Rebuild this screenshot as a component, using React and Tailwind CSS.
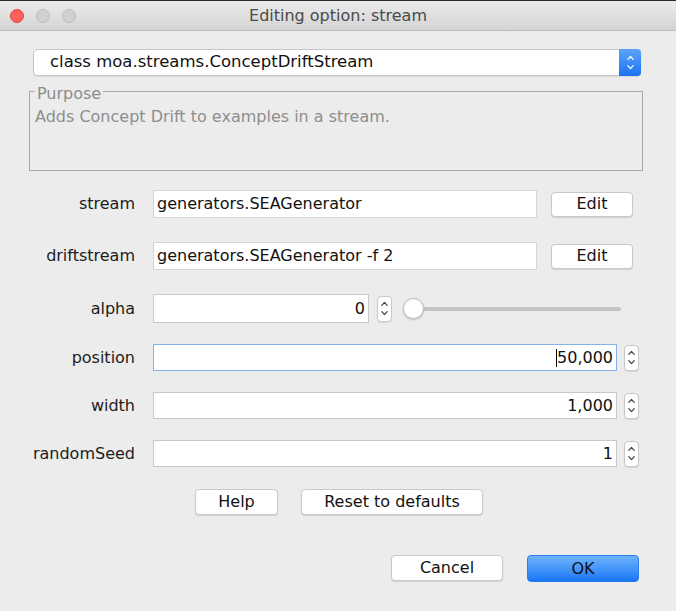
import React from 'react'

function Chevrons({ color = '#555', size = 7 }) {
  return (
    <svg width={size} height={size * 2 + 3} viewBox="0 0 8 19" fill="none">
      <path d="M1 6 L4 2.5 L7 6" stroke={color} strokeWidth="1.4" strokeLinecap="round" strokeLinejoin="round" />
      <path d="M1 13 L4 16.5 L7 13" stroke={color} strokeWidth="1.4" strokeLinecap="round" strokeLinejoin="round" />
    </svg>
  )
}

function Spinner() {
  return (
    <div className="flex h-[26px] w-[15px] items-center justify-center rounded-[4px] border border-[#c8c8c8] bg-white shadow-[0_1px_1px_rgba(0,0,0,0.08)]">
      <Chevrons color="#444" size={7} />
    </div>
  )
}

function Button({ children, className = '' }) {
  return (
    <button
      className={`flex items-center justify-center rounded-[4px] border border-[#c9c9c9] bg-white text-[16px] text-[#111] shadow-[0_1px_1px_rgba(0,0,0,0.12)] ${className}`}
    >
      {children}
    </button>
  )
}

function Label({ children }) {
  return <div className="w-[135px] shrink-0 text-right text-[16px] text-[#1c1c1c]">{children}</div>
}

function Field({ children, className = '', align = 'left' }) {
  return (
    <div
      className={`flex h-full items-center border bg-white text-[16px] text-[#111] ${
        align === 'right' ? 'justify-end pr-[3px]' : 'pl-[3px]'
      } ${className}`}
    >
      {children}
    </div>
  )
}

export default function App() {
  return (
    <div className="flex h-[611px] w-[676px] flex-col bg-[#ececec] font-['DejaVu_Sans',sans-serif]">
      {/* title bar */}
      <div className="relative flex h-[31px] shrink-0 items-center border-t border-b border-t-[#2a2a2a] border-b-[#bdbdbd] bg-gradient-to-b from-[#ebebeb] to-[#d4d4d4]">
        <div className="ml-[10px] flex gap-[12px]">
          <div className="h-[14px] w-[14px] rounded-full border border-[#e0443e] bg-[#fc605c]" />
          <div className="h-[14px] w-[14px] rounded-full border border-[#bcbcbc] bg-[#d0d0d0]" />
          <div className="h-[14px] w-[14px] rounded-full border border-[#bcbcbc] bg-[#d0d0d0]" />
        </div>
        <div className="absolute inset-0 flex items-center justify-center text-[16px] text-[#4a4a4a]">
          Editing option: stream
        </div>
      </div>

      {/* class selector */}
      <div className="ml-[33px] mt-[18px] flex h-[27px] w-[608px] items-center rounded-[4px] border border-[#c6c6c6] bg-white shadow-[0_1px_1px_rgba(0,0,0,0.08)]">
        <div className="flex-1 pl-[16px] text-[16.5px] text-[#111]">class moa.streams.ConceptDriftStream</div>
        <div className="flex h-[27px] w-[22px] items-center justify-center rounded-r-[4px] bg-gradient-to-b from-[#5aa3fb] to-[#1a72f2] -mr-[1px]">
          <Chevrons color="#fff" size={7} />
        </div>
      </div>

      {/* purpose */}
      <fieldset className="ml-[29px] mt-[4px] h-[91px] w-[614px] border border-[#a9a9a9] px-[5px]">
        <legend className="px-[2px] pt-[6px] text-[16px] leading-[16px] text-[#8c8c8c]">Purpose</legend>
        <div className="mt-[5px] text-[16px] leading-[20px] text-[#8e8e8e]">
          Adds Concept Drift to examples in a stream.
        </div>
      </fieldset>

      {/* options */}
      <div className="mt-[19px] flex flex-col">
        <div className="flex h-[28px] items-center">
          <Label>stream</Label>
          <div className="ml-[18px] h-full w-[384px]">
            <Field className="border-[#d6d6d6]">generators.SEAGenerator</Field>
          </div>
          <Button className="ml-[14px] h-[25px] w-[82px]">Edit</Button>
        </div>

        <div className="mt-[24px] flex h-[28px] items-center">
          <Label>driftstream</Label>
          <div className="ml-[18px] h-full w-[384px]">
            <Field className="border-[#d6d6d6]">generators.SEAGenerator -f 2</Field>
          </div>
          <Button className="ml-[14px] h-[25px] w-[82px]">Edit</Button>
        </div>

        <div className="mt-[24px] flex h-[29px] items-center">
          <Label>alpha</Label>
          <div className="ml-[18px] h-full w-[216px]">
            <Field align="right" className="border-[#c9c9c9]">0</Field>
          </div>
          <div className="ml-[8px]">
            <Spinner />
          </div>
          <div className="ml-[11px] flex items-center">
            <div className="z-10 h-[21px] w-[21px] rounded-full border border-[#bdbdbd] bg-white shadow-[0_1px_2px_rgba(0,0,0,0.2)]" />
            <div className="-ml-[2px] h-[4px] w-[199px] rounded-full bg-[#c4c4c4]" />
          </div>
        </div>

        <div className="mt-[21px] flex h-[27px] items-center">
          <Label>position</Label>
          <div className="ml-[18px] h-full w-[464px]">
            <Field align="right" className="border-[#86b3ee]">
              <span className="inline-block h-[18px] w-[1px] bg-black" />
              50,000
            </Field>
          </div>
          <div className="ml-[7px]">
            <Spinner />
          </div>
        </div>

        <div className="mt-[21px] flex h-[27px] items-center">
          <Label>width</Label>
          <div className="ml-[18px] h-full w-[464px]">
            <Field align="right" className="border-[#c9c9c9]">1,000</Field>
          </div>
          <div className="ml-[7px]">
            <Spinner />
          </div>
        </div>

        <div className="mt-[21px] flex h-[27px] items-center">
          <Label>randomSeed</Label>
          <div className="ml-[18px] h-full w-[464px]">
            <Field align="right" className="border-[#c9c9c9]">1</Field>
          </div>
          <div className="ml-[7px]">
            <Spinner />
          </div>
        </div>
      </div>

      {/* help / reset */}
      <div className="mt-[22px] flex justify-center gap-[23px] pl-[2px]">
        <Button className="h-[26px] w-[83px]">Help</Button>
        <Button className="h-[26px] w-[182px]">Reset to defaults</Button>
      </div>

      {/* cancel / ok */}
      <div className="mt-[40px] flex justify-end gap-[24px] pr-[37px]">
        <Button className="h-[26px] w-[112px]">Cancel</Button>
        <button className="flex h-[27px] w-[112px] items-center justify-center rounded-[4px] border border-[#2d7cf0] bg-gradient-to-b from-[#6db3fb] to-[#1577f7] text-[16px] text-[#111]">
          OK
        </button>
      </div>
    </div>
  )
}
